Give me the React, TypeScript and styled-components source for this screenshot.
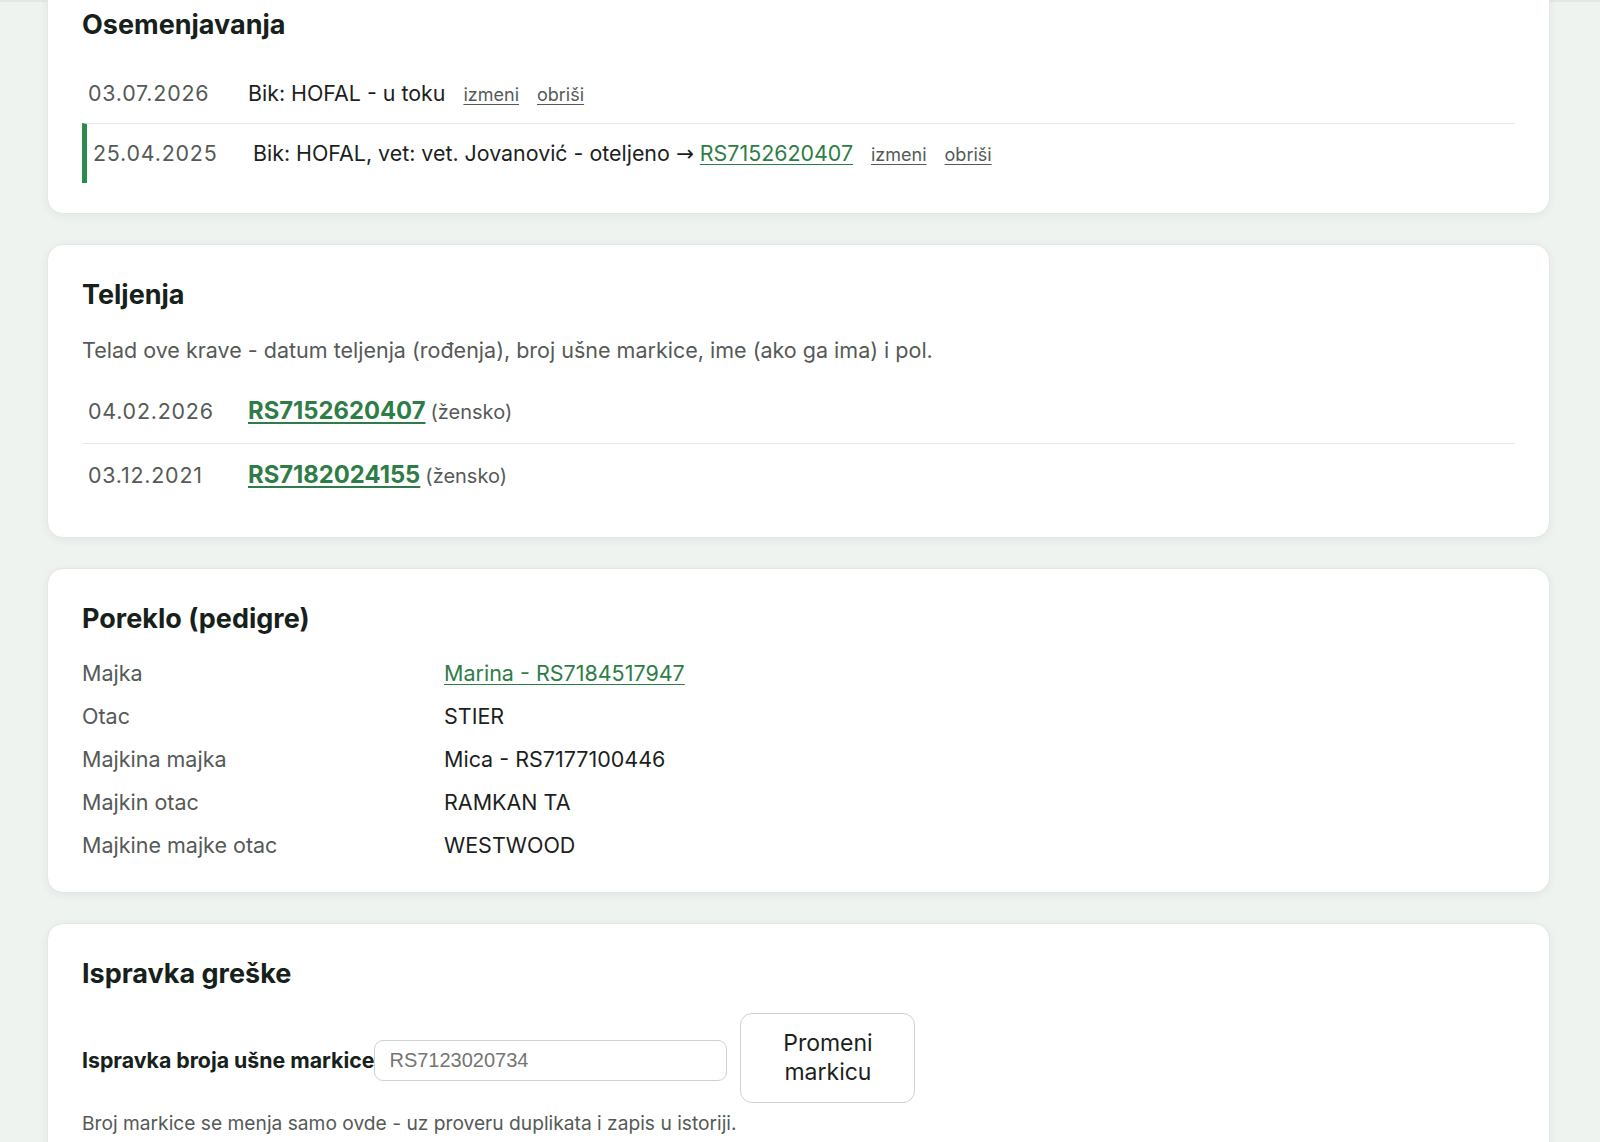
import styled, { createGlobalStyle } from 'styled-components';

type Insemination = {
  date: string;
  text: string;
  calf?: string;
  done?: boolean;
};

type Calf = {
  date: string;
  tag: string;
  sex: string;
};

const inseminations: Insemination[] = [
  { date: '03.07.2026', text: 'Bik: HOFAL - u toku' },
  {
    date: '25.04.2025',
    text: 'Bik: HOFAL, vet: vet. Jovanović - oteljeno',
    calf: 'RS7152620407',
    done: true,
  },
];

const calves: Calf[] = [
  { date: '04.02.2026', tag: 'RS7152620407', sex: 'žensko' },
  { date: '03.12.2021', tag: 'RS7182024155', sex: 'žensko' },
];

const pedigree: { label: string; value: string; link?: boolean }[] = [
  { label: 'Majka', value: 'Marina - RS7184517947', link: true },
  { label: 'Otac', value: 'STIER' },
  { label: 'Majkina majka', value: 'Mica - RS7177100446' },
  { label: 'Majkin otac', value: 'RAMKAN TA' },
  { label: 'Majkine majke otac', value: 'WESTWOOD' },
];

const App = (): JSX.Element => (
  <>
    <GlobalStyle />
    <Page>
      <Card $cut>
        <Title>Osemenjavanja</Title>
        <List>
          {inseminations.map((item) => (
            <Row key={item.date} $marked={item.done}>
              <DateCell>{item.date}</DateCell>
              <Body>
                {item.text}
                {item.calf && (
                  <>
                    {' '}
                    <Arrow>→</Arrow>{' '}
                    <InlineLink href="#">{item.calf}</InlineLink>
                  </>
                )}
                <Action href="#">izmeni</Action>
                <Action href="#">obriši</Action>
              </Body>
            </Row>
          ))}
        </List>
      </Card>

      <Card>
        <Title>Teljenja</Title>
        <Description>
          Telad ove krave - datum teljenja (rođenja), broj ušne markice, ime
          (ako ga ima) i pol.
        </Description>
        <List>
          {calves.map((calf) => (
            <Row key={calf.tag} $tall>
              <DateCell>{calf.date}</DateCell>
              <Body>
                <TagLink href="#">{calf.tag}</TagLink>
                <Sex>({calf.sex})</Sex>
              </Body>
            </Row>
          ))}
        </List>
      </Card>

      <Card>
        <Title>Poreklo (pedigre)</Title>
        <Pedigree>
          {pedigree.map((p) => (
            <PedigreeRow key={p.label}>
              <Label>{p.label}</Label>
              {p.link ? (
                <Value>
                  <InlineLink href="#">{p.value}</InlineLink>
                </Value>
              ) : (
                <Value>{p.value}</Value>
              )}
            </PedigreeRow>
          ))}
        </Pedigree>
      </Card>

      <Card>
        <Title>Ispravka greške</Title>
        <Form>
          <FieldLabel htmlFor="tag">Ispravka broja ušne markice</FieldLabel>
          <Input id="tag" placeholder="RS7123020734" />
          <Button type="button">Promeni markicu</Button>
        </Form>
        <Note>
          Broj markice se menja samo ovde - uz proveru duplikata i zapis u
          istoriji.
        </Note>
      </Card>
    </Page>
  </>
);

export default App;

const GlobalStyle = createGlobalStyle`
  html, body {
    margin: 0;
    padding: 0;
    background: #eef3f0;
    font-family: Inter, "Noto Sans", sans-serif;
    color: #1c1f1d;
  }
  * {
    box-sizing: border-box;
  }
`;

const Page = styled.main`
  display: flex;
  flex-direction: column;
  gap: 30px;
  padding: 0 50px 40px 47px;
  border-top: 2px solid #e4e8e5;
`;

const Card = styled.section<{ $cut?: boolean }>`
  background: #fff;
  border: 1px solid #e3e8e4;
  border-radius: 16px;
  box-shadow: 0 2px 8px rgba(30, 50, 40, 0.06);
  padding: 30px 34px;
  margin-top: ${(p) => (p.$cut ? '-28px' : '0')};
`;

const Title = styled.h2`
  margin: 0 0 20px;
  font-size: 27px;
  line-height: 39px;
  font-weight: 700;
  color: #17211b;
`;

const Description = styled.p`
  margin: 0 0 14px;
  font-size: 21.5px;
  line-height: 32px;
  color: #555a57;
`;

const List = styled.div`
  display: flex;
  flex-direction: column;
`;

const Row = styled.div<{ $marked?: boolean; $tall?: boolean }>`
  display: flex;
  align-items: center;
  padding: ${(p) => (p.$tall ? '15px 6px' : '13.5px 6px')};
  border-left: ${(p) => (p.$marked ? '5px solid #2e8a4c' : 'none')};
  font-size: 21.4px;
  line-height: 31px;
  & + & {
    border-top: 1px solid #e6e9e7;
  }
`;

const DateCell = styled.span`
  flex: 0 0 160px;
  color: #555a57;
  letter-spacing: 0.8px;
`;

const Body = styled.span`
  color: #1c1f1d;
`;

const Arrow = styled.span`
  font-family: Roboto, 'DejaVu Sans', sans-serif;
`;

const InlineLink = styled.a`
  color: #2e7d46;
  text-decoration: underline;
  text-underline-offset: 3px;
  text-decoration-thickness: 1px;
`;

const Action = styled.a`
  margin-left: 18px;
  font-size: 18px;
  color: #555a57;
  text-decoration: underline;
  text-underline-offset: 3px;
  text-decoration-thickness: 1px;
`;

const TagLink = styled.a`
  font-size: 23.8px;
  font-weight: 700;
  color: #2e7d46;
  text-decoration: underline;
  text-underline-offset: 3px;
  text-decoration-thickness: 2px;
`;

const Sex = styled.span`
  margin-left: 5px;
  font-size: 20px;
  color: #555a57;
`;

const Pedigree = styled.div`
  display: flex;
  flex-direction: column;
  gap: 11.5px;
`;

const PedigreeRow = styled.div`
  display: grid;
  grid-template-columns: 362px 1fr;
  font-size: 21.5px;
  line-height: 31.5px;
`;

const Label = styled.span`
  color: #555a57;
`;

const Value = styled.span`
  color: #1c1f1d;
`;

const Form = styled.div`
  display: flex;
  align-items: center;
`;

const FieldLabel = styled.label`
  padding-top: 5px;
  font-size: 21.3px;
  font-weight: 700;
  color: #17211b;
`;

const Input = styled.input`
  width: 353px;
  height: 41px;
  margin: 5px 13px 0 0;
  padding: 0 14px;
  border: 1px solid #cdd3cf;
  border-radius: 9px;
  font-family: 'Liberation Sans', Arial, sans-serif;
  font-size: 20px;
  color: #1c1f1d;
  outline: none;
  &::placeholder {
    color: #757575;
  }
`;

const Button = styled.button`
  width: 175px;
  height: 90px;
  padding: 0 20px;
  background: #fff;
  border: 1px solid #cdd3cf;
  border-radius: 12px;
  font-family: Inter, sans-serif;
  font-size: 23px;
  line-height: 29px;
  color: #1c1f1d;
  cursor: pointer;
  :hover {
    background: #f6f8f7;
  }
`;

const Note = styled.p`
  margin: 6px 0 0;
  font-size: 19.2px;
  line-height: 28px;
  color: #555a57;
`;
